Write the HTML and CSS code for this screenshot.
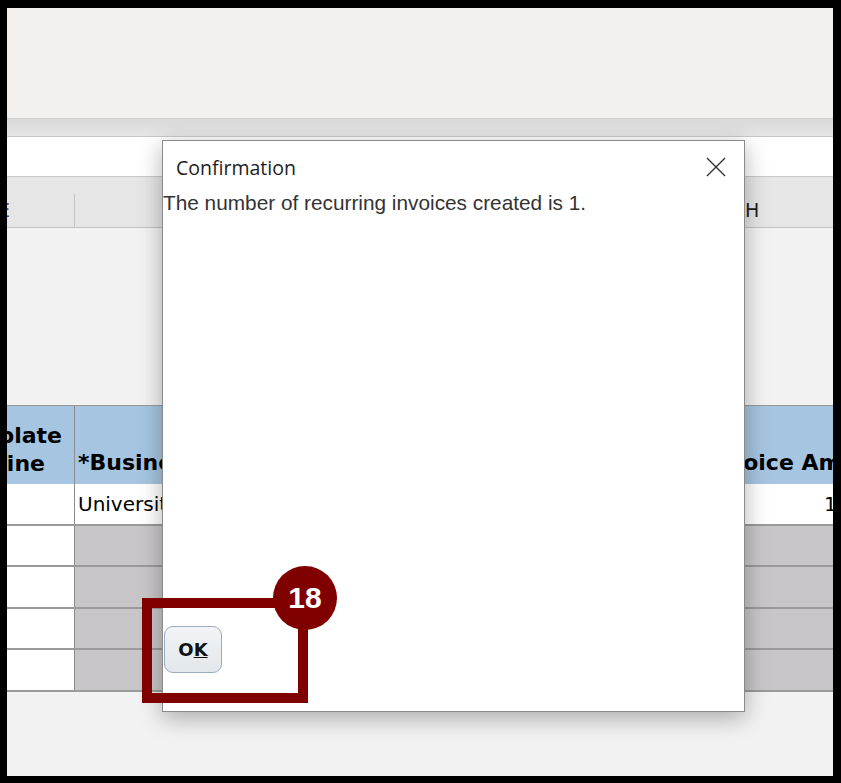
FILE: index.html
```html
<!DOCTYPE html>
<html>
<head>
<meta charset="UTF-8">
<link rel="stylesheet" href="styles.css">
</head>
<body>
<div class="screen">
  <div class="toolbar"></div>
  <div class="band"></div>
  <div class="filter-bar"></div>
  <div class="col-head">
    <div class="col-head-cell first"><span class="clip-left">E</span></div>
    <div class="col-head-cell mid"></div>
    <div class="col-head-cell last">H</div>
  </div>
  <div class="gap-area"></div>

  <div class="grid">
    <div class="grid-row head">
      <div class="cell c1">
        <span class="head-lines"><span>Template</span><span class="line-2">Line</span></span>
      </div>
      <div class="cell c2">*Business Unit</div>
      <div class="cell c3"></div>
      <div class="cell c4">Invoice Amount</div>
    </div>
    <div class="grid-row">
      <div class="cell c1"></div>
      <div class="cell c2">University</div>
      <div class="cell c3"></div>
      <div class="cell c4 num">1,000.00</div>
    </div>
    <div class="grid-row empty">
      <div class="cell c1"></div><div class="cell c2"></div><div class="cell c3"></div><div class="cell c4"></div>
    </div>
    <div class="grid-row empty">
      <div class="cell c1"></div><div class="cell c2"></div><div class="cell c3"></div><div class="cell c4"></div>
    </div>
    <div class="grid-row empty">
      <div class="cell c1"></div><div class="cell c2"></div><div class="cell c3"></div><div class="cell c4"></div>
    </div>
    <div class="grid-row empty">
      <div class="cell c1"></div><div class="cell c2"></div><div class="cell c3"></div><div class="cell c4"></div>
    </div>
  </div>

  <div class="dialog">
    <div class="dialog-head">
      <span class="dialog-title">Confirmation</span>
      <svg class="close" width="20" height="20" viewBox="0 0 20 20">
        <path d="M1 1 L19 19 M19 1 L1 19" stroke="#333" stroke-width="1.4" fill="none"/>
      </svg>
    </div>
    <p class="dialog-msg">The number of recurring invoices created is 1.</p>
    <div class="dialog-foot">
      <button class="ok-btn">O<u>K</u></button>
    </div>
  </div>

  <div class="callout-box"></div>
  <div class="callout-num">18</div>
</div>
</body>
</html>
```

FILE: styles.css
```css
* {
  box-sizing: border-box;
  margin: 0;
  padding: 0;
}

body {
  background: #000;
  width: 841px;
  height: 783px;
  overflow: hidden;
  padding: 8px 8px 7px 7px;
}

.screen {
  position: relative;
  width: 826px;
  height: 768px;
  background: #f2f2f2;
  overflow: hidden;
  font-family: "DejaVu Sans", sans-serif;
}

.toolbar {
  height: 110px;
  background: #f2f1f0;
}

.band {
  height: 19px;
  background: linear-gradient(#d9d9d9, #e6e6e6);
  border-top: 1px solid #d0d0d0;
  border-bottom: 1px solid #c9c9c9;
}

.filter-bar {
  height: 40px;
  background: #fff;
  border-bottom: 1px solid #c8c8c8;
}

.col-head {
  display: flex;
  height: 51px;
  background: #e6e6e6;
  border-bottom: 1px solid #c0c0c0;
  font-size: 19px;
  color: #222;
}

.col-head-cell {
  display: flex;
  align-items: flex-end;
  padding-bottom: 6px;
}

.col-head-cell.first {
  width: 68px;
  border-right: 1px solid #c4c4c4;
  margin-top: 17px;
  overflow: hidden;
}

.col-head-cell.mid {
  width: 670px;
}

.col-head-cell.last {
  flex: 1;
}

.clip-left {
  margin-left: -9px;
  white-space: nowrap;
  color: #2a4f8a;
}

.gap-area {
  height: 177px;
}

.grid {
  width: 912px;
  border-top: 1px solid #9a9a9a;
}

.grid-row {
  display: flex;
  height: 41.5px;
  border-bottom: 2px solid #9a9a9a;
  background: #fff;
}

.grid-row.head {
  height: 78px;
  background: #a5c5e1;
  font-weight: bold;
  line-height: 1.3;
  color: #000;
  border-bottom: none;
}

.cell {
  overflow: hidden;
  white-space: nowrap;
  padding: 0 4px;
  font-size: 20px;
  display: flex;
  align-items: center;
}

.head .cell {
  font-size: 22px;
  align-items: flex-end;
  padding-bottom: 6px;
}

.c1 {
  width: 68px;
  border-right: 1px solid #8c8c8c;
  padding: 0;
}

.head .c1 {
  padding-bottom: 5px;
}

.head-lines {
  display: flex;
  flex-direction: column;
  align-items: flex-end;
  flex-shrink: 0;
  width: 124px;
  margin-left: -69px;
}

.line-2 {
  padding-right: 17px;
}

.c2 {
  width: 320px;
  padding-left: 3px;
}

.c3 {
  width: 306px;
}

.c4 {
  flex: 1;
}

.num {
  justify-content: flex-end;
  padding-right: 6px;
}

.empty .c2,
.empty .c3,
.empty .c4 {
  background: #c8c6c8;
}

.dialog {
  position: absolute;
  left: 155px;
  top: 132px;
  width: 583px;
  height: 572px;
  background: #fff;
  border: 1px solid #8a8a8a;
  box-shadow: 0 6px 22px rgba(0, 0, 0, 0.3);
  display: flex;
  flex-direction: column;
}

.dialog-head {
  display: flex;
  justify-content: space-between;
  align-items: center;
  padding: 8px 18px 0 13px;
  height: 44px;
}

.dialog-title {
  font-family: "Open Sans", sans-serif;
  font-size: 19.5px;
  color: #222;
}

.dialog-msg {
  font-family: "Liberation Sans", Arial, sans-serif;
  font-size: 20.8px;
  color: #333;
  margin-top: 6px;
}

.dialog-foot {
  margin-top: auto;
  padding: 0 0 38px 1px;
}

.ok-btn {
  width: 58px;
  height: 47px;
  border: 1px solid #9aabbd;
  border-radius: 9px;
  background: linear-gradient(#f2f4f6, #e2e7eb);
  font-family: "DejaVu Sans", sans-serif;
  font-weight: bold;
  font-size: 18px;
  color: #111;
}

.callout-box {
  position: absolute;
  left: 135px;
  top: 590px;
  width: 166px;
  height: 105px;
  border: 10px solid #800000;
}

.callout-num {
  position: absolute;
  left: 266px;
  top: 558px;
  width: 64px;
  height: 64px;
  border-radius: 50%;
  background: #800000;
  color: #fff;
  font-family: "Liberation Sans", Arial, sans-serif;
  font-weight: bold;
  font-size: 30px;
  display: flex;
  align-items: center;
  justify-content: center;
}
```
